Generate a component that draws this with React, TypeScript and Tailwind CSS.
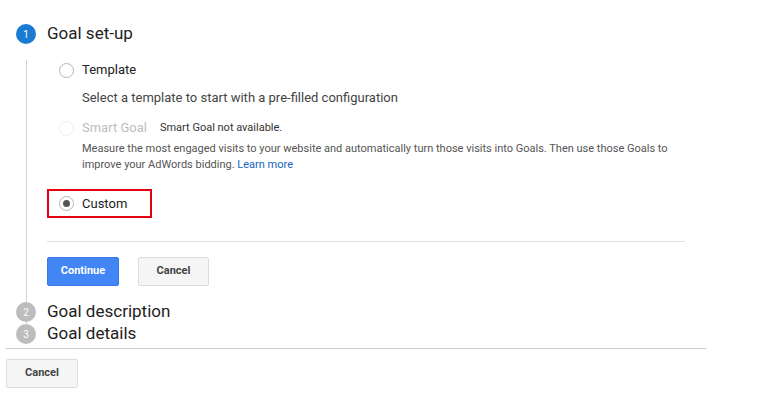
import React from "react";

const font = { fontFamily: "Roboto, 'Liberation Sans', sans-serif" };

function Radio({ checked, disabled }: { checked?: boolean; disabled?: boolean }) {
  return (
    <span
      className={`flex h-[15px] w-[15px] shrink-0 items-center justify-center rounded-full border bg-white ${
        disabled ? "border-[#ececec]" : "border-[#b5b5b5]"
      }`}
    >
      {checked && <span className="h-[7px] w-[7px] rounded-full bg-[#555]" />}
    </span>
  );
}

function StepBadge({ n, active }: { n: number; active?: boolean }) {
  return (
    <span
      className={`flex h-[20px] w-[20px] shrink-0 items-center justify-center rounded-full text-[10px] text-white ${
        active ? "bg-[#1a7bd3]" : "bg-[#bdbdbd]"
      }`}
    >
      {n}
    </span>
  );
}

export default function App() {
  return (
    <div className="h-[400px] w-[759px] overflow-hidden bg-white pt-[24px]" style={font}>
      <div className="pl-[16px]">
        {/* step 1 */}
        <div className="flex h-[20px] items-center gap-[11px]">
          <StepBadge n={1} active />
          <span className="text-[17px] text-[#222]">Goal set-up</span>
        </div>

        <div className="ml-[10px] border-l border-[#d4d4d4] pb-[16px] pl-[20px]">
          <div className="mt-[16px] flex h-[20px] items-center gap-[8px] pl-[12px]">
            <Radio />
            <span className="text-[13px] text-[#222]">Template</span>
          </div>
          <p className="mt-[9px] pl-[35px] text-[13px] leading-[18px] text-[#444]">
            Select a template to start with a pre-filled configuration
          </p>

          <div className="mt-[11px] flex h-[20px] items-center pl-[12px]">
            <Radio disabled />
            <span className="ml-[8px] text-[13px] text-[#bdbdbd]">Smart Goal</span>
            <span className="ml-[13px] text-[11px] text-[#333]">Smart Goal not available.</span>
          </div>
          <p className="mt-[3px] pl-[35px] text-[11px] leading-[16px] text-[#555]">
            <span className="whitespace-nowrap">
              Measure the most engaged visits to your website and automatically turn those visits into Goals. Then use those Goals to
            </span>
            <br />
            improve your AdWords bidding. <span className="text-[#1565c0]">Learn more</span>
          </p>

          <div className="mt-[16px] flex h-[29px] w-[105px] items-center gap-[8px] border-2 border-[#e3000f] pl-[10px]">
            <Radio checked />
            <span className="text-[13px] text-[#222]">Custom</span>
          </div>

          <div className="mt-[23px] h-px w-[638px] bg-[#e0e0e0]" />

          <div className="mt-[15px] flex gap-[19px]">
            <button className="h-[29px] w-[72px] rounded-[2px] border border-[#3b78e7] bg-[#4285f4] text-[11px] font-bold text-white">
              Continue
            </button>
            <button className="h-[29px] w-[71px] rounded-[2px] border border-[#dcdcdc] bg-[#f5f5f5] text-[11px] font-bold text-[#444]">
              Cancel
            </button>
          </div>
        </div>

        {/* step 2 */}
        <div className="flex h-[20px] items-center gap-[11px]">
          <StepBadge n={2} />
          <span className="text-[17px] text-[#222]">Goal description</span>
        </div>
        <div className="ml-[10px] h-[2px] border-l border-[#d4d4d4]" />
        {/* step 3 */}
        <div className="flex h-[20px] items-center gap-[11px]">
          <StepBadge n={3} />
          <span className="text-[17px] text-[#222]">Goal details</span>
        </div>
      </div>

      <div className="ml-[6px] mt-[4px] h-px w-[700px] bg-[#cccccc]" />
      <div className="ml-[6px] mt-[10px]">
        <button className="h-[29px] w-[72px] rounded-[2px] border border-[#dcdcdc] bg-[#f5f5f5] text-[11px] font-bold text-[#444]">
          Cancel
        </button>
      </div>
    </div>
  );
}
